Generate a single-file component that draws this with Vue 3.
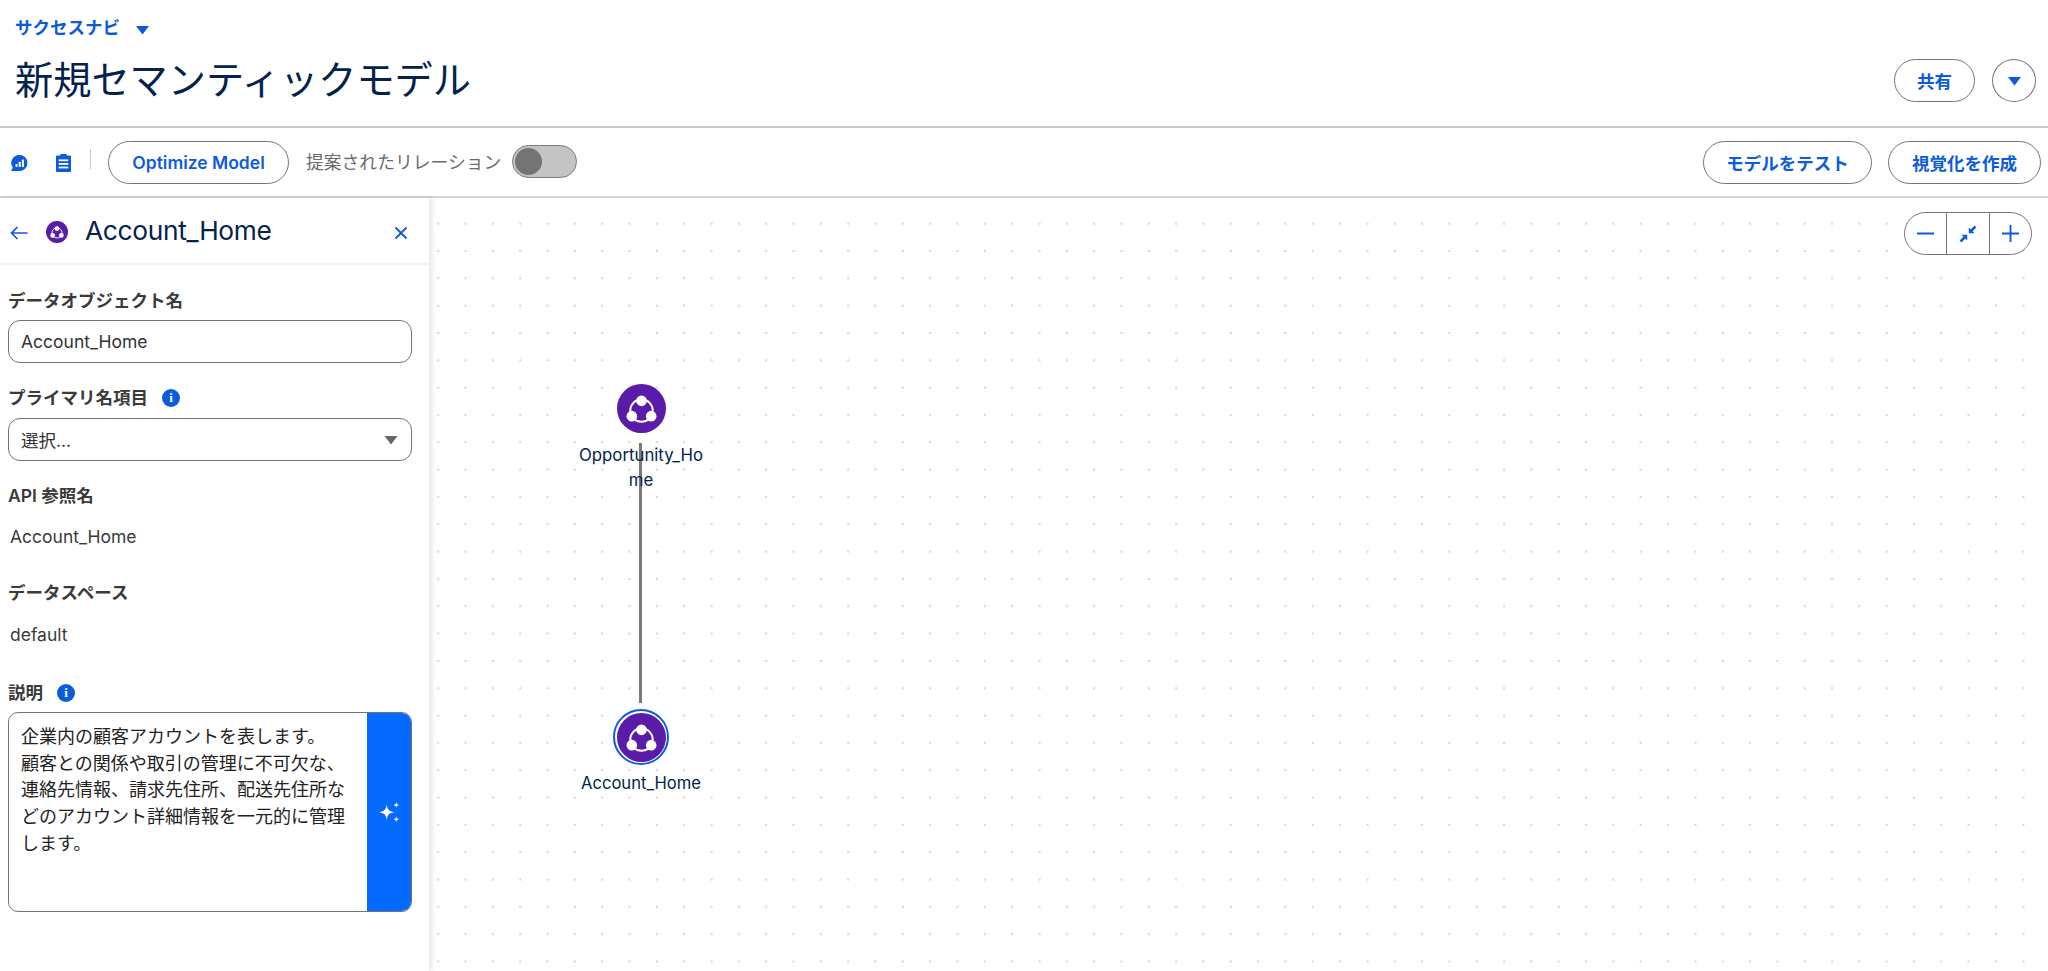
<script setup>
const desc = '企業内の顧客アカウントを表します。\n顧客との関係や取引の管理に不可欠な、\n連絡先情報、請求先住所、配送先住所などのアカウント詳細情報を一元的に管理します。'
</script>

<template>
  <div class="page">
    <svg class="defs" aria-hidden="true">
      <symbol id="obj" viewBox="0 0 48 48">
        <circle cx="24" cy="24" r="24" fill="#5a1ba9" />
        <circle cx="24" cy="26" r="11" fill="#5a1ba9" stroke="#fff" stroke-width="2" />
        <g fill="#fff">
          <circle cx="24" cy="16.500" r="5.200" />
          <circle cx="14.500" cy="31.500" r="5.200" />
          <circle cx="33.500" cy="31.500" r="5.200" />
        </g>
      </symbol>
    </svg>

    <header class="head">
      <div class="head-left">
        <div class="crumb">
          <span>サクセスナビ</span>
          <svg class="crumb-caret" viewBox="0 0 14 10"><path d="M0.500 1h13L7 9.500z" /></svg>
        </div>
        <h1 class="title">新規セマンティックモデル</h1>
      </div>
      <div class="head-right">
        <button class="pill share">共有</button>
        <button class="round">
          <svg viewBox="0 0 14 10"><path d="M0.500 1h13L7 9.500z" /></svg>
        </button>
      </div>
    </header>

    <div class="toolbar">
      <div class="tools">
        <svg class="tool-i first" viewBox="0 0 18 17">
          <path d="M9.500 0a8 8 0 0 1 0 16H1l1.800-3.300A8 8 0 0 1 9.500 0z" />
          <rect x="5.500" y="9" width="2" height="3" rx=".4" fill="#fff" />
          <rect x="8.700" y="6.800" width="2" height="5.200" rx=".4" fill="#fff" />
          <rect x="11.900" y="4.400" width="2" height="7.600" rx=".4" fill="#fff" />
        </svg>
        <svg class="tool-i second" viewBox="0 0 16 18">
          <path d="M4.800 0h6.400v1.600h3.300a1 1 0 0 1 1 1V17a1 1 0 0 1-1 1H1.500a1 1 0 0 1-1-1V2.600a1 1 0 0 1 1-1h3.300z" />
          <g fill="#fff">
            <rect x="3.200" y="5.400" width="9.600" height="1.800" />
            <rect x="3.200" y="9" width="9.600" height="1.800" />
            <rect x="3.200" y="12.600" width="9.600" height="1.800" />
          </g>
        </svg>
        <span class="tool-sep"></span>
        <button class="pill optimize">Optimize Model</button>
        <span class="sugg">提案されたリレーション</span>
        <span class="toggle"><span class="knob"></span></span>
      </div>
      <div class="tool-actions">
        <button class="pill test">モデルをテスト</button>
        <button class="pill viz">視覚化を作成</button>
      </div>
    </div>

    <div class="body">
      <aside class="panel">
        <div class="panel-head">
          <svg class="back" viewBox="0 0 18 14"><path d="M7.500 1 1.500 7l6 6M1.800 7H17.500" /></svg>
          <svg class="obj-small"><use href="#obj" /></svg>
          <span class="panel-title">Account_Home</span>
          <svg class="close" viewBox="0 0 14 14"><path d="M1.500 1.500l11 11M12.500 1.500l-11 11" /></svg>
        </div>
        <div class="form">
          <label class="lbl first-lbl">データオブジェクト名</label>
          <div class="field name-field">Account_Home</div>

          <label class="lbl with-info second-lbl">プライマリ名項目
            <span class="info">i</span>
          </label>
          <div class="field select">
            <span>選択...</span>
            <svg viewBox="0 0 14 10"><path d="M0.500 1h13L7 9.500z" /></svg>
          </div>

          <label class="lbl api-lbl">API 参照名</label>
          <div class="val api-val">Account_Home</div>

          <label class="lbl space-lbl">データスペース</label>
          <div class="val">default</div>

          <label class="lbl with-info desc-lbl">説明
            <span class="info">i</span>
          </label>
          <div class="desc">
            <div class="desc-text">{{ desc }}</div>
            <div class="spark">
              <svg viewBox="0 0 20 20">
                <path d="M7.700 2.600C8.400 7.500 9.800 9.400 15.200 10.300 9.800 11.200 8.400 13.100 7.700 18 7 13.100 5.600 11.200.2 10.300 5.600 9.400 7 7.500 7.700 2.600z" />
                <path d="M17.300 0c.3 1.800.9 2.400 2.700 2.900-1.800.5-2.400 1.100-2.700 2.900-.3-1.800-.9-2.400-2.700-2.900 1.800-.5 2.400-1.100 2.700-2.900z" />
                <path d="M17.300 14.300c.3 1.800.9 2.400 2.700 2.900-1.800.5-2.400 1.100-2.700 2.900-.3-1.800-.9-2.400-2.700-2.900 1.800-.5 2.400-1.100 2.700-2.900z" />
              </svg>
            </div>
          </div>
        </div>
      </aside>

      <main class="canvas">
        <div class="zoom">
          <button><svg viewBox="0 0 18 18"><path d="M0 9h18" /></svg></button>
          <button>
            <svg class="fit" viewBox="0 0 18 18">
              <path d="M11 7 16.500 1.500M1.500 16.500 7 11" />
              <path class="solid" d="M9.800 2.500v5.700h5.700zM8.200 15.500V9.800H2.500z" />
            </svg>
          </button>
          <button><svg viewBox="0 0 18 18"><path d="M0 9h18M9 0v18" /></svg></button>
        </div>

        <div class="edge"></div>

        <div class="node opp">
          <svg class="node-i"><use href="#obj" /></svg>
          <div class="node-label">Opportunity_Ho<br />me</div>
        </div>

        <div class="node acc">
          <span class="ring">
            <svg class="node-i"><use href="#obj" /></svg>
          </span>
          <div class="node-label">Account_Home</div>
        </div>
      </main>
    </div>
  </div>
</template>

<style>
html, body { margin: 0; padding: 0; background: #fff; }
</style>

<style scoped>
.defs { display: none; }
.page {
  width: 2048px;
  height: 971px;
  overflow: hidden;
  display: flex;
  flex-direction: column;
  font-family: "Inter", "Noto Sans CJK JP", sans-serif;
  color: #181818;
  background: #fff;
}
button { font-family: inherit; cursor: pointer; }
.head {
  height: 128px;
  flex: none;
  display: flex;
  justify-content: space-between;
  box-sizing: border-box;
  border-bottom: 2px solid #c9c9c9;
}
.head-left { padding: 18px 0 0 15px; }
.crumb {
  display: flex;
  align-items: center;
  gap: 15px;
  font-size: 17.500px;
  font-weight: 600;
  line-height: 20px;
  color: #0b5cdb;
}
.crumb-caret { width: 15px; height: 10px; fill: #0b5cdb; margin-top: 3px; }
.title {
  margin: 17px 0 0;
  font-size: 38.200px;
  font-weight: 400;
  line-height: 50px;
  color: #03234d;
}
.head-right {
  display: flex;
  align-items: flex-start;
  gap: 17px;
  padding: 59px 12px 0 0;
}
.pill {
  height: 43px;
  box-sizing: border-box;
  border: 1.500px solid #747474;
  border-radius: 22px;
  background: #fff;
  color: #0b5cdb;
  font-size: 17.500px;
  font-weight: 600;
  padding: 0;
}
.share { width: 81px; }
.round {
  width: 44px;
  height: 43px;
  box-sizing: border-box;
  border: 1.500px solid #747474;
  border-radius: 50%;
  background: #fff;
  padding: 0;
  display: flex;
  align-items: center;
  justify-content: center;
}
.round svg { width: 15px; height: 10px; fill: #0b5cdb; }
.toolbar {
  height: 70px;
  flex: none;
  box-sizing: border-box;
  border-bottom: 2px solid #d4d4d4;
  display: flex;
  justify-content: space-between;
  align-items: flex-start;
}
.tools { display: flex; align-items: flex-start; padding-top: 13px; }
.tool-i { fill: #0b5cdb; flex: none; }
.tool-i.first { width: 18px; height: 17px; margin: 14px 0 0 10px; }
.tool-i.second { width: 17px; height: 18px; margin: 13px 0 0 27px; }
.tool-sep { width: 1px; height: 20px; background: #c9c9c9; margin: 8px 0 0 18px; }
.optimize { width: 181px; margin-left: 17px; }
.sugg { font-size: 17.800px; line-height: 44px; color: #6a6a6a; margin-left: 17px; }
.toggle {
  width: 65px;
  height: 33px;
  box-sizing: border-box;
  margin: 4px 0 0 11px;
  border: 1.500px solid #7a7a7a;
  border-radius: 17px;
  background: #c4c4c4;
  display: block;
  padding: 1.500px;
}
.knob { display: block; width: 27px; height: 27px; border-radius: 50%; background: #747474; }
.tool-actions { display: flex; gap: 16px; padding: 13px 7px 0 0; }
.test { width: 169px; }
.viz { width: 153px; }
.body { flex: 1; display: flex; min-height: 0; }
.panel {
  width: 429px;
  flex: none;
  background: #fff;
  box-shadow: 3px 0 5px rgba(0, 0, 0, .1);
  position: relative;
  z-index: 1;
}
.panel-head {
  height: 67px;
  box-sizing: border-box;
  border-bottom: 2px solid #f3f3f3;
  display: flex;
  align-items: center;
  padding: 0 21px 0 10px;
}
.back { width: 18px; height: 14px; fill: none; stroke: #0b5cdb; stroke-width: 1.700; margin-top: 4px; }
.obj-small { width: 22px; height: 22px; margin: 2px 0 0 18px; }
.panel-title { font-size: 26.300px; color: #03234d; margin-left: 17px; flex: 1; letter-spacing: -0.300px; }
.close { width: 14px; height: 14px; fill: none; stroke: #0b5cdb; stroke-width: 1.800; margin-top: 4px; }
.form { padding: 0 17px 0 8px; }
.lbl {
  display: flex;
  align-items: center;
  gap: 14px;
  font-size: 17.500px;
  font-weight: 600;
  line-height: 22px;
  color: #3a3a3a;
  height: 22px;
}
.first-lbl { margin-top: 25px; }
.field {
  height: 43px;
  box-sizing: border-box;
  border: 1.500px solid #747474;
  border-radius: 12px;
  padding: 0 12px;
  font-size: 17.500px;
  color: #333;
  display: flex;
  justify-content: space-between;
  align-items: center;
}
.name-field { margin-top: 8px; }
.select { margin-top: 9px; }
.select svg { width: 14px; height: 10px; fill: #666; margin-right: 1px; }
.second-lbl { margin-top: 24px; }
.api-lbl { margin-top: 24px; }
.val { font-size: 17.500px; line-height: 22px; color: #3a3a3a; margin: 20px 0 0 2px; }
.api-val { margin-top: 19px; }
.space-lbl { margin-top: 34px; }
.desc-lbl { margin-top: 36px; }
.info {
  width: 18px;
  height: 18px;
  border-radius: 50%;
  background: #0b5cdb;
  color: #fff;
  font-size: 13px;
  font-weight: 800;
  line-height: 18px;
  text-align: center;
  font-family: "Liberation Serif", serif;
}
.desc {
  margin-top: 8px;
  height: 200px;
  box-sizing: border-box;
  border: 1.500px solid #747474;
  border-radius: 10px;
  display: flex;
  overflow: hidden;
}
.desc-text {
  flex: 1;
  padding: 11px 16px 11px 12px;
  font-size: 18px;
  line-height: 26.700px;
  white-space: pre-wrap;
  color: #222;
}
.spark {
  width: 44px;
  flex: none;
  background: #066afe;
  display: flex;
  align-items: center;
  justify-content: center;
}
.spark svg { width: 20px; height: 20px; fill: #fff; margin-left: -1px; }
.canvas {
  flex: 1;
  position: relative;
  background-color: #fff;
  background-image: radial-gradient(circle, #d9d9d9 1.100px, transparent 1.600px);
  background-size: 27.330px 27.330px;
  background-position: -4.400px 12px;
}
.zoom {
  position: absolute;
  top: 14px;
  right: 16px;
  width: 128px;
  display: flex;
  height: 43px;
  box-sizing: border-box;
  border: 1.500px solid #747474;
  border-radius: 22px;
  overflow: hidden;
  background: #fff;
}
.zoom button {
  flex: 1;
  border: 0;
  padding: 0;
  background: transparent;
  display: flex;
  align-items: center;
  justify-content: center;
}
.zoom button + button { border-left: 1.500px solid #747474; }
.zoom svg { width: 17px; height: 17px; fill: none; stroke: #0b5cdb; stroke-width: 2; }
.zoom svg.fit { width: 18px; height: 18px; stroke-width: 2.500; }
.solid { fill: #0b5cdb; stroke: none; }
.edge {
  position: absolute;
  left: 210px;
  top: 245px;
  width: 3px;
  height: 260px;
  background: #7a7a7a;
}
.node {
  position: absolute;
  width: 130px;
  display: flex;
  flex-direction: column;
  align-items: center;
}
.opp { left: 147px; top: 186px; }
.acc { left: 147px; top: 511px; }
.node-i { width: 49px; height: 49px; display: block; }
.ring {
  width: 49px;
  height: 49px;
  border-radius: 50%;
  padding: 1.500px;
  border: 2px solid #0b5cdb;
  display: block;
  box-sizing: content-box;
}
.node-label {
  font-size: 16.800px;
  line-height: 24.500px;
  color: #03234d;
  text-align: center;
  margin-top: 10px;
}
.acc .node-label { margin-top: 6px; font-size: 16.600px; }
</style>
